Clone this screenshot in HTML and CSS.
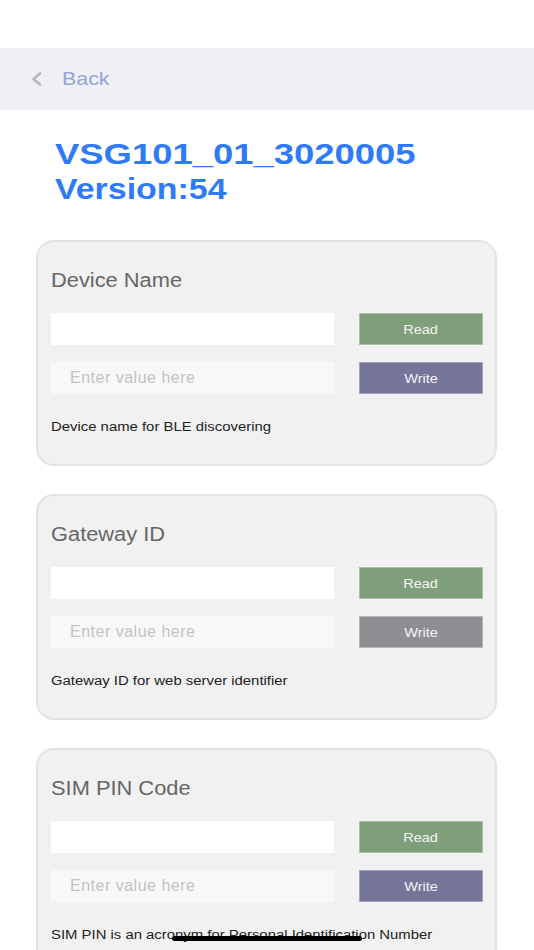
FILE: index.html
```html
<!DOCTYPE html>
<html>
<head>
<meta charset="utf-8">
<title>Device settings</title>
<link rel="stylesheet" href="styles.css">
</head>
<body>
<div class="status"></div>
<nav class="nav">
  <svg class="chev" width="11" height="14" viewBox="0 0 11 14"><polyline points="9,1.5 2.5,7 9,12.5" fill="none" stroke="#b7b7b7" stroke-width="2.6" stroke-linecap="round" stroke-linejoin="round"/></svg>
  <span class="back sx">Back</span>
</nav>
<header class="heading">
  <div class="hline"><span class="sx id">VSG101_01_3020005</span></div>
  <div class="hline"><span class="sx ver">Version:54</span></div>
</header>
<main class="cards">
  <section class="card">
    <h2 class="card-title"><span class="sx">Device Name</span></h2>
    <div class="row"><div class="field value"></div><button class="btn read"><span class="sx">Read</span></button></div>
    <div class="row"><input class="field entry" placeholder="Enter value here"><button class="btn write"><span class="sx">Write</span></button></div>
    <p class="desc"><span class="sx">Device name for BLE discovering</span></p>
  </section>
  <section class="card">
    <h2 class="card-title"><span class="sx">Gateway ID</span></h2>
    <div class="row"><div class="field value"></div><button class="btn read"><span class="sx">Read</span></button></div>
    <div class="row"><input class="field entry" placeholder="Enter value here"><button class="btn write disabled"><span class="sx">Write</span></button></div>
    <p class="desc"><span class="sx">Gateway ID for web server identifier</span></p>
  </section>
  <section class="card">
    <h2 class="card-title"><span class="sx">SIM PIN Code</span></h2>
    <div class="row"><div class="field value"></div><button class="btn read"><span class="sx">Read</span></button></div>
    <div class="row"><input class="field entry" placeholder="Enter value here"><button class="btn write"><span class="sx">Write</span></button></div>
    <p class="desc"><span class="sx">SIM PIN is an acronym for Personal Identification Number</span></p>
  </section>
</main>
<div class="home-indicator"></div>
</body>
</html>
```
FILE: styles.css
```css
html, body {
  margin: 0;
  padding: 0;
}
body {
  width: 534px;
  height: 950px;
  overflow: hidden;
  background: #ffffff;
  font-family: "Liberation Sans", Arial, Helvetica, sans-serif;
}
.sx {
  display: inline-block;
  transform-origin: left center;
  white-space: nowrap;
}
.status {
  height: 48px;
}
.nav {
  height: 62px;
  background: #efeff4;
  display: flex;
  align-items: center;
  padding-left: 31px;
  gap: 20px;
}
.chev {
  display: block;
}
.back {
  font-size: 18.6px;
  color: #92a6d9;
  transform: scaleX(1.15);
}
.heading {
  padding: 26px 0 0 55px;
  margin-bottom: 34px;
  color: #2f7af6;
  font-weight: bold;
  font-size: 29.5px;
  line-height: 35px;
}
.heading .id {
  transform: scaleX(1.235);
}
.heading .ver {
  transform: scaleX(1.15);
}
.cards {
  display: flex;
  flex-direction: column;
  gap: 28px;
}
.card {
  margin: 0 37px 0 36px;
  border: 2px solid #e3e3e3;
  border-radius: 18px;
  background: #f1f1f1;
  padding: 27px 12px 29px 13px;
}
.card-title {
  margin: 0 0 22px 0;
  font-weight: normal;
  font-size: 19.5px;
  line-height: 22px;
  color: #666666;
}
.card-title .sx {
  transform: scaleX(1.12);
}
.row {
  display: flex;
  gap: 25px;
  height: 32px;
}
.row + .row {
  margin-top: 17px;
}
.field {
  flex: 1;
  box-sizing: border-box;
  height: 32px;
  border: none;
  margin: 0;
  outline: none;
}
.value {
  background: #ffffff;
}
.entry {
  background: #f8f8f8;
  padding: 0 0 0 19px;
  font-family: "Liberation Sans", Arial, sans-serif;
  font-size: 16px;
  letter-spacing: 0.5px;
  color: #333;
  min-width: 0;
}
.entry::placeholder {
  color: #c3c3c3;
}
.btn {
  width: 124px;
  height: 32px;
  box-sizing: border-box;
  margin: 0;
  padding: 0;
  border: 1px solid rgba(255, 255, 255, 0.35);
  color: #f4f4f4;
  font-family: "Liberation Sans", Arial, sans-serif;
  font-size: 13px;
  text-align: center;
  display: flex;
  align-items: center;
  justify-content: center;
}
.btn .sx {
  transform-origin: center center;
  transform: scaleX(1.12);
}
.read {
  background: #7f9e7a;
}
.write {
  background: #75759a;
}
.write.disabled {
  background: #8e8e93;
}
.desc {
  margin: 26px 0 0 0;
  font-size: 12.3px;
  line-height: 15px;
  color: #222222;
}
.desc .sx {
  transform: scaleX(1.21);
}
.home-indicator {
  position: fixed;
  left: 172px;
  bottom: 9px;
  width: 190px;
  height: 5px;
  border-radius: 3px;
  background: #000000;
}
```
